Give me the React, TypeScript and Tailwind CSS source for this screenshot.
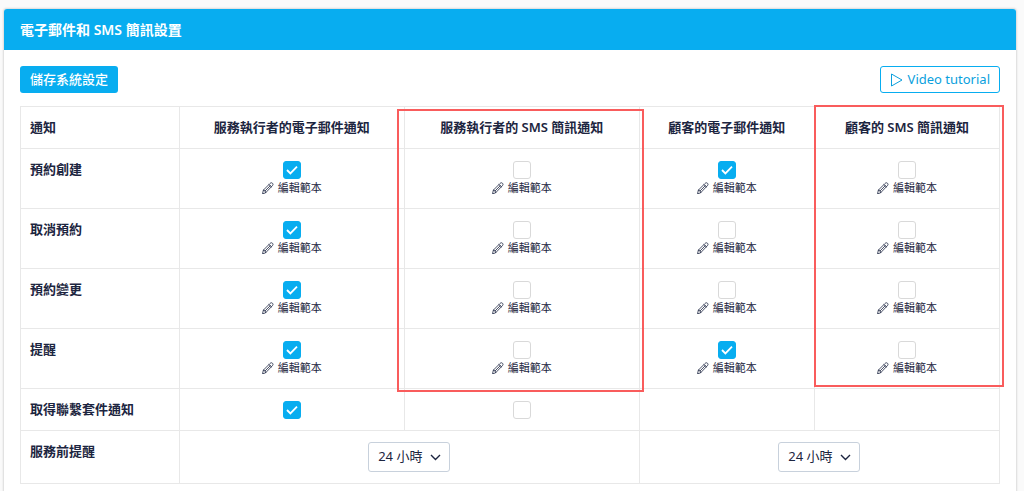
import { useState } from "react";

type Channel = "staffEmail" | "staffSms" | "clientEmail" | "clientSms"

const channels: { key: Channel, label: string }[] = [
    { key: "staffEmail", label: "服務執行者的電子郵件通知" },
    { key: "staffSms", label: "服務執行者的 SMS 簡訊通知" },
    { key: "clientEmail", label: "顧客的電子郵件通知" },
    { key: "clientSms", label: "顧客的 SMS 簡訊通知" },
]

const events = [
    { id: "created", label: "預約創建", on: ["staffEmail", "clientEmail"] },
    { id: "cancelled", label: "取消預約", on: ["staffEmail"] },
    { id: "changed", label: "預約變更", on: ["staffEmail"] },
    { id: "reminder", label: "提醒", on: ["staffEmail", "clientEmail"] },
]

function PencilIcon() {
    return (
        <svg width="12" height="12" viewBox="0 0 24 24" fill="none" stroke="currentColor" strokeWidth="1.6" strokeLinejoin="round" strokeLinecap="round" aria-hidden="true">
            <path d="M1.2 22.8l1.6-6.6L15.8 3.2c2-2 3.6-2.200 5.200-.6s1.400 3.200-.6 5.200L7.600 21.200z" />
            <path d="M2.800 16.200c2.600.2 4.600 2.400 4.800 5M13.800 5.200l5 4.600M6 18L16.800 7.200" />
        </svg>
    )
}

function Check({ label, initial }: { label: string, initial: boolean }) {
    const [checked, setChecked] = useState(initial)
    return (
        <span className="relative block size-[18px]">
            <input
                type="checkbox"
                aria-label={label}
                checked={checked}
                onChange={(e) => setChecked(e.target.checked)}
                className="block size-[18px] appearance-none rounded-[3px] border border-[#d9d9d9] bg-white checked:border-[#08adf0] checked:bg-[#08adf0] cursor-pointer"
            />
            {checked && (
                <svg className="pointer-events-none absolute inset-0" width="18" height="18" viewBox="0 0 18 18" fill="none" stroke="white" strokeWidth="1.8" aria-hidden="true">
                    <path d="M4 9l3.400 3.400L14 5.600" />
                </svg>
            )}
        </span>
    )
}

function HoursSelect({ label }: { label: string }) {
    const [hours, setHours] = useState("24")
    return (
        <div className="relative inline-block align-top">
            <select
                aria-label={label}
                value={hours}
                onChange={(e) => setHours(e.target.value)}
                className="block h-[30px] appearance-none rounded-[3px] border border-[#c8d1dc] bg-white pl-[9px] pr-[26px] text-[13px]"
            >
                <option value="24">24 小時</option>
                <option value="48">48 小時</option>
            </select>
            <svg className="pointer-events-none absolute right-2 top-2" width="13" height="13" viewBox="0 0 13 13" fill="none" stroke="currentColor" strokeWidth="1.4" aria-hidden="true">
                <path d="M2 5l4.500 4.500L11 5" />
            </svg>
        </div>
    )
}

export default function App() {
    const cell = "border border-[#e8e8e8]"
    const rowHead = "border border-[#e8e8e8] px-[9px] pt-[10px] pb-[11px] text-left align-top font-semibold leading-5"

    return (
        <div className="flex min-h-screen flex-col bg-[#fafafa] pl-1 pr-2 pt-[9px] font-['Noto_Sans','Noto_Sans_CJK_TC',sans-serif] text-[13px] text-[#1c2540]">
            <section className="flex-1 rounded-t-[3px] bg-white shadow-[0_0_2px_1px_rgba(0,0,0,0.13)]">
                <h1 className="rounded-t-[3px] bg-[#08adf0] px-4 py-[10px] text-sm font-semibold leading-[21px] text-white">電子郵件和 SMS 簡訊設置</h1>
                <div className="px-4 pt-4">
                    <div className="mb-[13px] flex items-center justify-between">
                        <button className="h-[27px] rounded-[3px] bg-[#08adf0] px-[10px] font-medium text-white">儲存系統設定</button>
                        <button className="flex h-[27px] items-center gap-[5px] rounded-[3px] border border-[#08adf0] px-[9px] text-[#0a9fdd]">
                            <svg width="13" height="14" viewBox="0 0 13 14" fill="none" stroke="currentColor" strokeLinejoin="round" aria-hidden="true">
                                <path d="M1.500 1v12L12 7z" />
                            </svg>
                            Video tutorial
                        </button>
                    </div>
                    <div className="relative">
                        <table className="w-full table-fixed border-collapse">
                            <colgroup>
                                <col className="w-[16.2%]" />
                                <col className="w-[23%]" />
                                <col className="w-[24%]" />
                                <col className="w-[17.9%]" />
                                <col className="w-[18.9%]" />
                            </colgroup>
                            <thead>
                                <tr>
                                    <th scope="col" className={rowHead}>通知</th>
                                    {channels.map((c) => (
                                        <th key={c.key} scope="col" className={`${cell} pt-[10px] pb-[11px] text-center font-semibold leading-5`}>{c.label}</th>
                                    ))}
                                </tr>
                            </thead>
                            <tbody>
                                {events.map((ev) => (
                                    <tr key={ev.id}>
                                        <th scope="row" className={rowHead}>{ev.label}</th>
                                        {channels.map((c) => (
                                            <td key={c.key} className={`${cell} pt-3 pb-[11px]`}>
                                                <div className="flex flex-col items-center">
                                                    <Check label={`${ev.label} ${c.label}`} initial={ev.on.includes(c.key)} />
                                                    <a href="#" className="flex items-center gap-1 text-[11px] leading-[18px]">
                                                        <PencilIcon />
                                                        編輯範本
                                                    </a>
                                                </div>
                                            </td>
                                        ))}
                                    </tr>
                                ))}
                                <tr>
                                    <th scope="row" className={rowHead}>取得聯繫套件通知</th>
                                    <td className={`${cell} pt-3 pb-[11px]`}>
                                        <div className="flex justify-center"><Check label="取得聯繫套件通知 電子郵件" initial={true} /></div>
                                    </td>
                                    <td className={`${cell} pt-3 pb-[11px]`}>
                                        <div className="flex justify-center"><Check label="取得聯繫套件通知 SMS" initial={false} /></div>
                                    </td>
                                    <td className={cell}></td>
                                    <td className={cell}></td>
                                </tr>
                                <tr>
                                    <th scope="row" className={rowHead}>服務前提醒</th>
                                    <td colSpan={2} className={`${cell} py-[11px] text-center`}><HoursSelect label="服務執行者 服務前提醒" /></td>
                                    <td colSpan={2} className={`${cell} py-[11px] text-center`}><HoursSelect label="顧客 服務前提醒" /></td>
                                </tr>
                            </tbody>
                        </table>
                        {/* highlight frames over the two SMS columns */}
                        <div className="pointer-events-none absolute left-[38.5%] top-[3px] h-[283px] w-[25.2%] border-2 border-[#f95c5c]"></div>
                        <div className="pointer-events-none absolute -right-1 -top-px h-[282px] w-[19.4%] border-2 border-[#f95c5c]"></div>
                    </div>
                </div>
            </section>
        </div>
    )
}
